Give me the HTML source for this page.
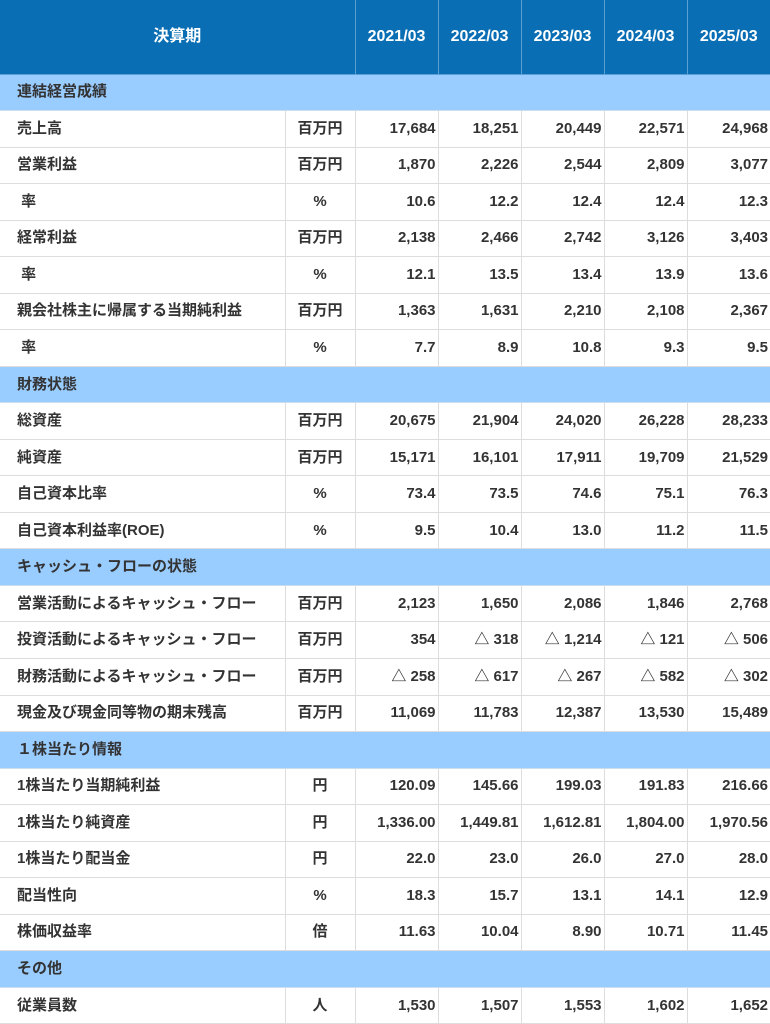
<!DOCTYPE html>
<html><head><meta charset="utf-8"><style>
html,body{margin:0;padding:0;background:#fff;}
table{border-collapse:collapse;table-layout:fixed;width:770px;font-family:"Liberation Sans","Noto Sans CJK JP",sans-serif;font-size:15px;color:#333;font-weight:bold;}
td,th{border:1px solid #ddd;padding:0 2px;box-sizing:border-box;white-space:nowrap;overflow:hidden;vertical-align:middle;}
td span,th span{display:block;line-height:20px;height:20px;}
tbody tr{height:36.54px;}
thead tr{height:74px;}
thead th{background:#0a6eb4;color:#fff;border:1px solid #5aa0d4;border-top:none;text-align:center;font-size:16px;}
thead th:first-child{border-left:none;}
thead th:last-child{border-right:none;}
td{text-align:right;}
td.l{text-align:left;padding-left:17px;}
td.u{text-align:center;}
tr.s td{background:#99ccff;text-align:left;padding-left:17px;border-color:#99ccff;border-bottom-color:#cde;}
td:first-child{border-left:none;}
td:last-child{border-right:none;}
</style></head><body>
<table>
<colgroup><col style="width:285px"><col style="width:70px"><col style="width:83px"><col style="width:83px"><col style="width:83px"><col style="width:83px"><col style="width:83px"></colgroup>
<thead><tr><th colspan="2"><span>決算期</span></th><th><span>2021/03</span></th><th><span>2022/03</span></th><th><span>2023/03</span></th><th><span>2024/03</span></th><th><span>2025/03</span></th></tr></thead>
<tbody>
<tr class="s"><td colspan="7"><span>連結経営成績</span></td></tr>
<tr><td class="l"><span>売上高</span></td><td class="u"><span>百万円</span></td><td><span>17,684</span></td><td><span>18,251</span></td><td><span>20,449</span></td><td><span>22,571</span></td><td><span>24,968</span></td></tr>
<tr><td class="l"><span>営業利益</span></td><td class="u"><span>百万円</span></td><td><span>1,870</span></td><td><span>2,226</span></td><td><span>2,544</span></td><td><span>2,809</span></td><td><span>3,077</span></td></tr>
<tr><td class="l"><span>&nbsp;率</span></td><td class="u"><span>%</span></td><td><span>10.6</span></td><td><span>12.2</span></td><td><span>12.4</span></td><td><span>12.4</span></td><td><span>12.3</span></td></tr>
<tr><td class="l"><span>経常利益</span></td><td class="u"><span>百万円</span></td><td><span>2,138</span></td><td><span>2,466</span></td><td><span>2,742</span></td><td><span>3,126</span></td><td><span>3,403</span></td></tr>
<tr><td class="l"><span>&nbsp;率</span></td><td class="u"><span>%</span></td><td><span>12.1</span></td><td><span>13.5</span></td><td><span>13.4</span></td><td><span>13.9</span></td><td><span>13.6</span></td></tr>
<tr><td class="l"><span>親会社株主に帰属する当期純利益</span></td><td class="u"><span>百万円</span></td><td><span>1,363</span></td><td><span>1,631</span></td><td><span>2,210</span></td><td><span>2,108</span></td><td><span>2,367</span></td></tr>
<tr><td class="l"><span>&nbsp;率</span></td><td class="u"><span>%</span></td><td><span>7.7</span></td><td><span>8.9</span></td><td><span>10.8</span></td><td><span>9.3</span></td><td><span>9.5</span></td></tr>
<tr class="s"><td colspan="7"><span>財務状態</span></td></tr>
<tr><td class="l"><span>総資産</span></td><td class="u"><span>百万円</span></td><td><span>20,675</span></td><td><span>21,904</span></td><td><span>24,020</span></td><td><span>26,228</span></td><td><span>28,233</span></td></tr>
<tr><td class="l"><span>純資産</span></td><td class="u"><span>百万円</span></td><td><span>15,171</span></td><td><span>16,101</span></td><td><span>17,911</span></td><td><span>19,709</span></td><td><span>21,529</span></td></tr>
<tr><td class="l"><span>自己資本比率</span></td><td class="u"><span>%</span></td><td><span>73.4</span></td><td><span>73.5</span></td><td><span>74.6</span></td><td><span>75.1</span></td><td><span>76.3</span></td></tr>
<tr><td class="l"><span>自己資本利益率(ROE)</span></td><td class="u"><span>%</span></td><td><span>9.5</span></td><td><span>10.4</span></td><td><span>13.0</span></td><td><span>11.2</span></td><td><span>11.5</span></td></tr>
<tr class="s"><td colspan="7"><span>キャッシュ・フローの状態</span></td></tr>
<tr><td class="l"><span>営業活動によるキャッシュ・フロー</span></td><td class="u"><span>百万円</span></td><td><span>2,123</span></td><td><span>1,650</span></td><td><span>2,086</span></td><td><span>1,846</span></td><td><span>2,768</span></td></tr>
<tr><td class="l"><span>投資活動によるキャッシュ・フロー</span></td><td class="u"><span>百万円</span></td><td><span>354</span></td><td><span>△ 318</span></td><td><span>△ 1,214</span></td><td><span>△ 121</span></td><td><span>△ 506</span></td></tr>
<tr><td class="l"><span>財務活動によるキャッシュ・フロー</span></td><td class="u"><span>百万円</span></td><td><span>△ 258</span></td><td><span>△ 617</span></td><td><span>△ 267</span></td><td><span>△ 582</span></td><td><span>△ 302</span></td></tr>
<tr><td class="l"><span>現金及び現金同等物の期末残高</span></td><td class="u"><span>百万円</span></td><td><span>11,069</span></td><td><span>11,783</span></td><td><span>12,387</span></td><td><span>13,530</span></td><td><span>15,489</span></td></tr>
<tr class="s"><td colspan="7"><span>１株当たり情報</span></td></tr>
<tr><td class="l"><span>1株当たり当期純利益</span></td><td class="u"><span>円</span></td><td><span>120.09</span></td><td><span>145.66</span></td><td><span>199.03</span></td><td><span>191.83</span></td><td><span>216.66</span></td></tr>
<tr><td class="l"><span>1株当たり純資産</span></td><td class="u"><span>円</span></td><td><span>1,336.00</span></td><td><span>1,449.81</span></td><td><span>1,612.81</span></td><td><span>1,804.00</span></td><td><span>1,970.56</span></td></tr>
<tr><td class="l"><span>1株当たり配当金</span></td><td class="u"><span>円</span></td><td><span>22.0</span></td><td><span>23.0</span></td><td><span>26.0</span></td><td><span>27.0</span></td><td><span>28.0</span></td></tr>
<tr><td class="l"><span>配当性向</span></td><td class="u"><span>%</span></td><td><span>18.3</span></td><td><span>15.7</span></td><td><span>13.1</span></td><td><span>14.1</span></td><td><span>12.9</span></td></tr>
<tr><td class="l"><span>株価収益率</span></td><td class="u"><span>倍</span></td><td><span>11.63</span></td><td><span>10.04</span></td><td><span>8.90</span></td><td><span>10.71</span></td><td><span>11.45</span></td></tr>
<tr class="s"><td colspan="7"><span>その他</span></td></tr>
<tr><td class="l"><span>従業員数</span></td><td class="u"><span>人</span></td><td><span>1,530</span></td><td><span>1,507</span></td><td><span>1,553</span></td><td><span>1,602</span></td><td><span>1,652</span></td></tr>
</tbody></table>
</body></html>
